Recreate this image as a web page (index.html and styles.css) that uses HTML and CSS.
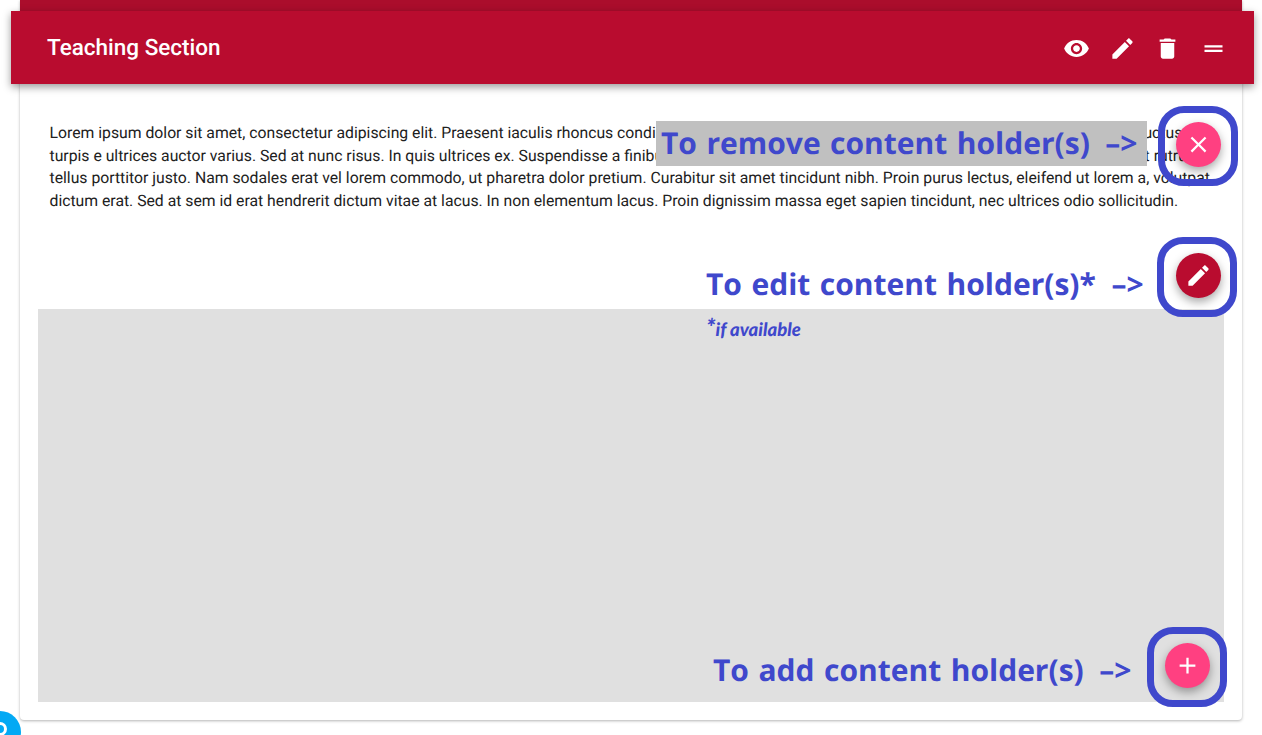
FILE: index.html
```html
<!DOCTYPE html>
<html lang="en">
<head>
  <meta charset="UTF-8"/>
  <meta name="viewport" content="width=device-width,initial-scale=1"/>
  <title>Teaching Section</title>
  <link rel="stylesheet" href="styles.css">
</head>
<body>

  <div class="card">
    <div class="card-strip"></div>
    <div class="section-bar">
      <h2>Teaching Section</h2>
      <div class="bar-icons">
        <svg viewBox="0 0 24 24"><path d="M12 4.5C7 4.5 2.73 7.61 1 12c1.73 4.39 6 7.5 11 7.5s9.27-3.11 11-7.5c-1.73-4.39-6-7.5-11-7.5zM12 17c-2.76 0-5-2.24-5-5s2.24-5 5-5 5 2.24 5 5-2.24 5-5 5zm0-8c-1.66 0-3 1.34-3 3s1.34 3 3 3 3-1.34 3-3-1.34-3-3-3z"/></svg>
        <svg viewBox="0 0 24 24"><path d="M3 17.25V21h3.75L17.81 9.94l-3.75-3.75L3 17.25zM20.71 7.04c.39-.39.39-1.02 0-1.41l-2.34-2.34c-.39-.39-1.02-.39-1.41 0l-1.83 1.83 3.75 3.75 1.83-1.83z"/></svg>
        <svg viewBox="0 0 24 24"><path d="M6 19c0 1.1.9 2 2 2h8c1.1 0 2-.9 2-2V7H6v12zM19 4h-3.5l-1-1h-5l-1 1H5v2h14V4z"/></svg>
        <svg viewBox="0 0 24 24"><path d="M20 9H4v2h16V9zM4 15h16v-2H4v2z"/></svg>
      </div>
    </div>

    <div class="card-body">
      <p class="lorem">Lorem ipsum dolor sit amet, consectetur adipiscing elit. Praesent iaculis rhoncus condimentum. Nulla facilisi. Vestibulum ante ipsum primis in faucibus orci luctus et turpis e ultrices auctor varius. Sed at nunc risus. In quis ultrices ex. Suspendisse a finibus sapien. Aliquam erat volutpat. Vivamus tempor lacinia sem, sit amet rutrum tellus porttitor justo. Nam sodales erat vel lorem commodo, ut pharetra dolor pretium. Curabitur sit amet tincidunt nibh. Proin purus lectus, eleifend ut lorem a, volutpat dictum erat. Sed at sem id erat hendrerit dictum vitae at lacus. In non elementum lacus. Proin dignissim massa eget sapien tincidunt, nec ultrices odio sollicitudin.</p>
      <div class="holder"></div>
    </div>
  </div>

  <!-- annotations on top of the page -->
  <div class="note note-remove">To remove content holder(s) <span class="arrow">–&gt;</span></div>
  <div class="note note-edit">To edit content holder(s)* <span class="arrow">–&gt;</span></div>
  <div class="note-small"><span class="star">*</span>if available</div>
  <div class="note note-add">To add content holder(s) <span class="arrow">–&gt;</span></div>

  <div class="fab fab-remove">
    <svg viewBox="0 0 24 24"><path d="M19 6.41L17.59 5 12 10.59 6.41 5 5 6.41 10.59 12 5 17.59 6.41 19 12 13.41 17.59 19 19 17.59 13.41 12z"/></svg>
  </div>
  <div class="fab fab-edit">
    <svg viewBox="0 0 24 24"><path d="M3 17.25V21h3.75L17.81 9.94l-3.75-3.75L3 17.25zM20.71 7.04c.39-.39.39-1.02 0-1.41l-2.34-2.34c-.39-.39-1.02-.39-1.41 0l-1.83 1.83 3.75 3.75 1.83-1.83z"/></svg>
  </div>
  <div class="fab fab-add">
    <svg viewBox="0 0 24 24"><path d="M19 13h-6v6h-2v-6H5v-2h6V5h2v6h6v2z"/></svg>
  </div>

  <div class="ring ring-remove"></div>
  <div class="ring ring-edit"></div>
  <div class="ring ring-add"></div>

  <div class="help-bubble"><span></span></div>

</body>
</html>
```

FILE: styles.css
```css
html, body { height:100%; }
body {
  margin:0; padding:0 20px 0 20px; background:#fff; overflow:hidden;
  font-family:Roboto, Arial, sans-serif; position:relative; box-sizing:border-box;
  width:1262px; text-rendering:geometricPrecision;
}

.card {
  width:1222px; height:720px; background:#fff; border-radius:0 0 4px 4px;
  box-shadow:0 1px 3px rgba(0,0,0,0.3);
  display:flex; flex-direction:column;
}
.card-strip { height:11px; background:#ab0d2c; flex:none; }

.section-bar {
  flex:none; height:73px; margin:0 -12px 0 -9px; padding:0 27.5px 0 36px;
  background:#b90c2f; color:#fff;
  display:flex; align-items:center; justify-content:space-between;
  box-shadow:0 3px 8px rgba(0,0,0,0.4);
  position:relative;
}
.section-bar h2 { margin:0; padding-top:1px; font-size:22.5px; font-weight:500; }
.bar-icons { display:flex; gap:18.4px; padding-top:1px; }
.bar-icons svg { width:27px; height:27px; fill:#fff; display:block; }

.card-body { flex:1; padding:38px 18px 18px; display:flex; flex-direction:column; }
.lorem {
  margin:0 0 97px; padding:0 12px 0 11.5px; font-size:15.75px; line-height:22.5px; color:#212121;
}
.holder { flex:1; background:#e0e0e0; }

.note {
  position:absolute; white-space:nowrap; color:#3f48cc;
  font-family:"Open Sans", sans-serif; font-weight:700; font-size:30px; line-height:40px;
  word-spacing:1.7px;
}
.arrow { margin-left:6px; }
.note-remove { left:656px; top:121px; width:491px; height:45px; line-height:44px; padding-left:5px; box-sizing:border-box; background:#c0c0c0; overflow:hidden; }
.note-edit { left:706px; top:264px; }
.note-add { left:713px; top:650px; }
.note-small {
  position:absolute; left:706px; top:319px; color:#3f48cc;
  font-family:Lato, sans-serif; font-style:italic; font-weight:900; font-size:18.5px; line-height:20px;
}
.star { font-size:24px; line-height:0; }

.fab {
  position:absolute; width:45px; height:45px; border-radius:50%;
  display:flex; align-items:center; justify-content:center;
  box-shadow:0 4px 10px rgba(0,0,0,0.35);
}
.fab svg { width:27px; height:27px; fill:#fff; display:block; }
.fab-remove { left:1176px; top:122px; background:#ff4081; }
.fab-edit { left:1176px; top:253px; background:#b90c2f; }
.fab-add { left:1165px; top:643px; background:#ff4081; }

.ring {
  position:absolute; width:80px; height:80px; box-sizing:border-box;
  border:7px solid #3f48cc; border-radius:26px;
}
.ring-remove { left:1158px; top:106px; }
.ring-edit { left:1157px; top:237px; }
.ring-add { left:1147px; top:627px; }

.help-bubble {
  position:absolute; left:-21px; top:711px; width:42px; height:42px;
  border-radius:50%; background:#03a9f4;
}
.help-bubble span {
  position:absolute; left:14px; top:11px; width:8px; height:8px;
  border:3px solid #fff; border-radius:50%;
}
```
